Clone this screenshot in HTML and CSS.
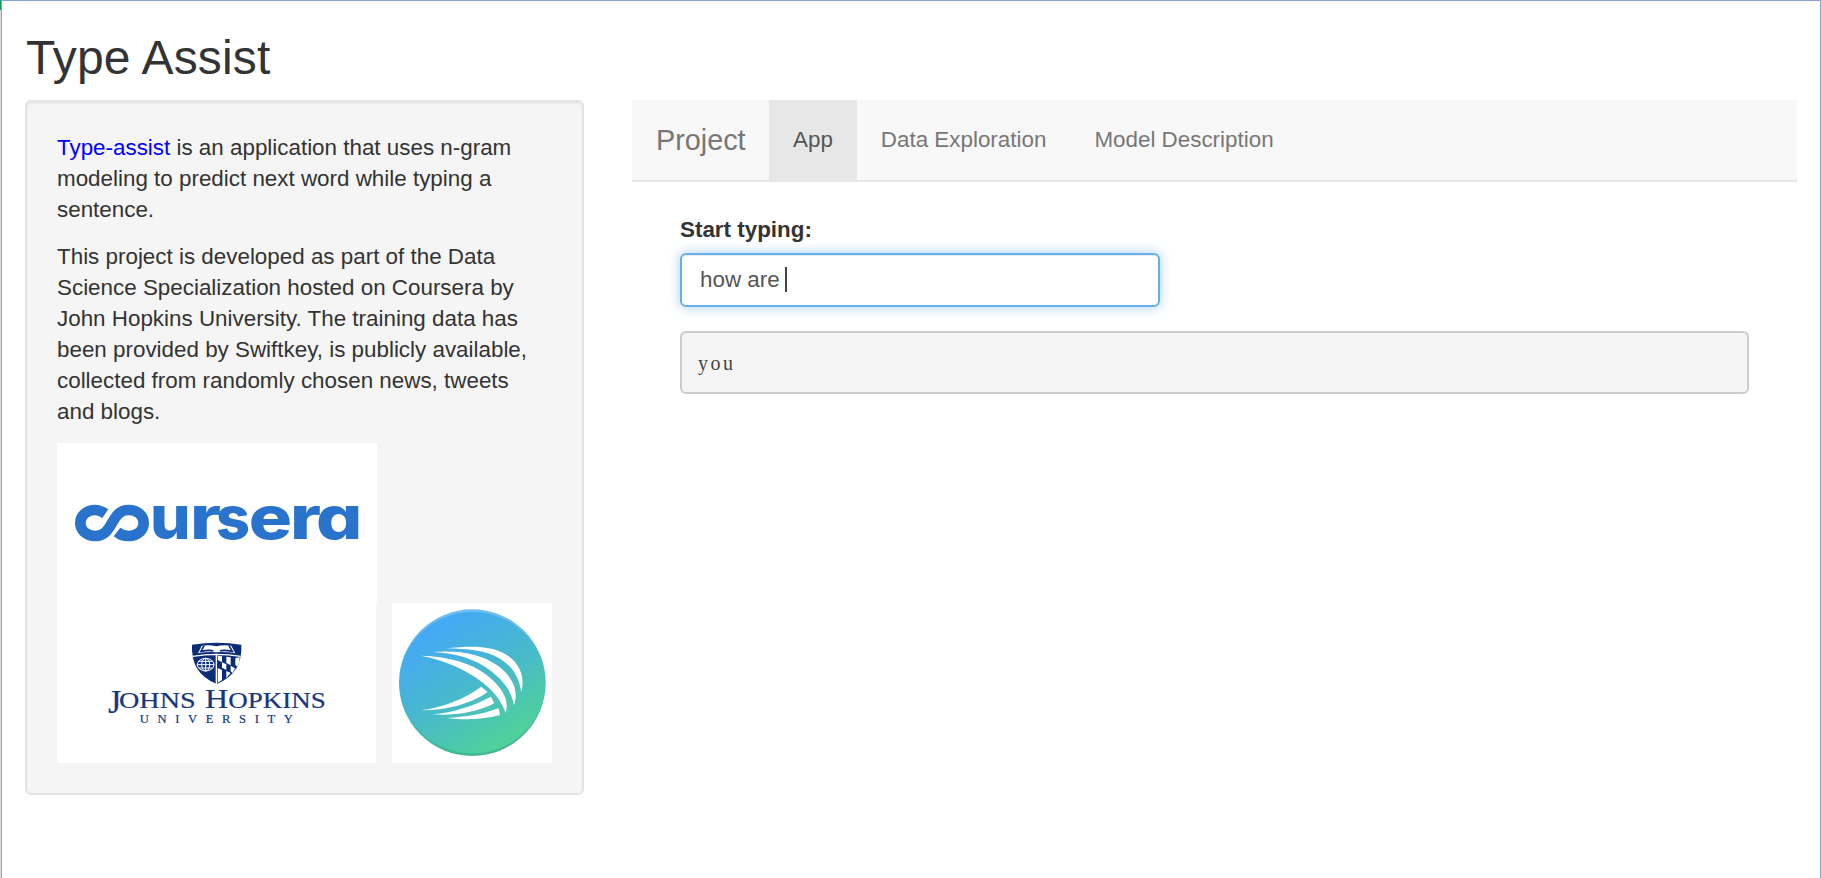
FILE: index.html
```html
<!DOCTYPE html>
<html lang="en">
<head>
<meta charset="utf-8">
<title>Type Assist</title>
<link rel="stylesheet" href="styles.css">
</head>
<body>
<div class="window">
  <h2 class="title">Type Assist</h2>
  <div class="columns">
    <aside class="well">
      <p><span class="name">Type-assist</span> is an application that uses n-gram<br>modeling to predict next word while typing a<br>sentence.</p>
      <p>This project is developed as part of the Data<br>Science Specialization hosted on Coursera by<br>John Hopkins University. The training data has<br>been provided by Swiftkey, is publicly available,<br>collected from randomly chosen news, tweets<br>and blogs.</p>
      <div class="logos">
        <svg class="logo coursera" viewBox="21 9 960 480" role="img" aria-label="coursera">
          <g class="coursera-text">
            <text y="297" x="300" textLength="122" lengthAdjust="spacingAndGlyphs">u</text>
            <text y="297" x="420" textLength="93" lengthAdjust="spacingAndGlyphs">r</text>
            <text y="297" x="498" textLength="102" lengthAdjust="spacingAndGlyphs">s</text>
            <text y="297" x="596" textLength="130" lengthAdjust="spacingAndGlyphs">e</text>
            <text y="297" x="720" textLength="93" lengthAdjust="spacingAndGlyphs">r</text>
            <text y="297" x="798" textLength="139" lengthAdjust="spacingAndGlyphs">a</text>
          </g>
          <path class="loop" d="M166 221C154 213 146 210 136 210C108 210 91 228 91 249C91 270 108 288 136 288C164 288 174 270 186 249C198 228 208 210 236 210C264 210 281 228 281 249C281 270 264 288 236 288C222 288 211 284 201 276"/>
        </svg>
        <svg class="logo hopkins" viewBox="21 9 957 480" role="img" aria-label="Johns Hopkins University">
          <path fill="#0b2d78" d="M426 134Q500 123 574 134Q576 175 560 203Q542 234 500 252Q458 234 440 203Q424 175 426 134Z"/>
          <path fill="none" stroke="#fff" stroke-width="4" d="M428 169Q500 157 572 169M499 163V252"/>
          <path fill="#fff" d="M455 137Q480 133 499 139Q520 133 544 137L556 160Q526 154 500 157Q474 154 444 160Z"/>
          <path fill="none" stroke="#0b2d78" stroke-width="5" d="M462 137L453 154Q480 149 490 153M537 137L547 154Q520 149 510 153"/>
          <g fill="none" stroke="#fff" stroke-width="3">
            <ellipse cx="467" cy="194" rx="25" ry="19"/><ellipse cx="467" cy="194" rx="12" ry="19"/>
            <path d="M467 175V213M442 194H492M446 184H488M446 204H488"/>
          </g>
          <path fill="#fff" d="M503 167L516 169V187L503 180ZM529 170L542 172V196L529 189ZM516 187L529 193V210L516 203ZM503 204L516 210V240L503 248ZM529 213L542 219L529 234ZM542 197L555 205L548 219L542 214ZM556 174L569 172Q570 186 562 200L556 195Z"/>
          <g class="hopkins-text">
            <text y="338" x="174" font-size="102">J</text>
            <text y="324" x="207" font-size="69" textLength="230" lengthAdjust="spacingAndGlyphs">OHNS</text>
            <text y="324" x="465" font-size="82" textLength="362" lengthAdjust="spacingAndGlyphs">H<tspan font-size="69">OPKINS</tspan></text>
            <text y="369" x="269" font-size="38" letter-spacing="24" textLength="484">UNIVERSITY</text>
          </g>
        </svg>
        <svg class="logo swiftkey" viewBox="36 39 480 480">
          <defs><linearGradient id="sky" x1=".2" y1=".1" x2=".75" y2=".95"><stop offset="0" stop-color="#45a8f8"/><stop offset=".5" stop-color="#47b9cc"/><stop offset="1" stop-color="#50d397"/></linearGradient>
          <linearGradient id="rim" x1="0" y1="0" x2="0" y2="1"><stop offset="0" stop-color="#71bdf2"/><stop offset=".5" stop-color="#49b8cb"/><stop offset="1" stop-color="#43b78e"/></linearGradient></defs>
          <circle cx="277" cy="278" r="220" fill="url(#rim)"/>
          <ellipse cx="277" cy="278" rx="218" ry="212" fill="url(#sky)"/>
          <path fill="#fff" d="M199 175C280 166 342 168 385 198C422 224 435 265 424 306C417 263 400 231 360 206C318 180 265 177 199 175ZM158 186C236 179 305 192 352 226C392 256 419 296 402 346C394 304 374 276 333 243C286 206 227 190 158 186ZM122 197C204 199 272 218 319 254C358 284 391 324 377 369C369 344 349 309 306 276C254 236 190 210 122 197ZM123 361C192 351 255 326 304 290L323 306C267 345 191 362 123 361ZM158 373C222 367 279 348 333 320L343 340C285 370 219 377 158 373ZM201 384C257 381 307 373 356 355L360 375C306 389 250 391 201 384Z"/>
        </svg>
      </div>
    </aside>
    <main class="main">
      <nav class="navbar">
        <span class="brand">Project</span><a class="tab active">App</a><a class="tab">Data Exploration</a><a class="tab">Model Description</a>
      </nav>
      <div class="content">
        <label class="label">Start typing:</label>
        <div class="input"><span class="typed">how are</span><span class="caret"></span></div>
        <pre class="output">you</pre>
      </div>
    </main>
  </div>
</div>
</body>
</html>
```
FILE: styles.css
```css
* { box-sizing: border-box; }
body {
  margin: 0;
  height: 878px;
  padding-left: 1px;
  overflow: hidden;
  background: linear-gradient(#159a5c 0 10px, #d9dce0 10px);
  font: 22.4px/31px "Liberation Sans", Arial, sans-serif;
  color: #333;
}
.window {
  height: 878px;
  padding: 29px 23px 0 23px;
  background: #fff;
  border: 1px solid #86a3d9;
  border-bottom: 0;
}
.title {
  margin: 0 0 15px;
  padding-left: 1px;
  font-size: 48px;
  line-height: 55px;
  font-weight: 400;
  letter-spacing: .15px;
}
.columns { display: flex; gap: 48px; align-items: flex-start; }
.well {
  width: 559px;
  height: 695px;
  padding: 30px;
  border: 2px solid #e3e3e3;
  border-radius: 6px;
  background: #f5f5f5;
  box-shadow: inset 0 2px 2px rgba(0, 0, 0, .05);
}
.well p { margin: 0 0 16px; white-space: nowrap; }
.name { color: #00f; }
.logos { display: flex; flex-wrap: wrap; column-gap: 16px; }
.logo { display: block; height: 160px; background: #fff; }
.coursera { width: 320px; margin-right: 100px; }
.hopkins { width: 319px; }
.swiftkey { width: 160px; }
.coursera-text {
  font-family: Inter, sans-serif;
  font-size: 181px;
  font-weight: 800;
  font-feature-settings: "cv11";
  fill: #2a73cc;
}
.loop { fill: none; stroke: #2a73cc; stroke-width: 32px; }
.hopkins-text { font-family: "Liberation Serif", serif; fill: #17377c; stroke: #17377c; stroke-width: .6px; }
.main { flex: 1; }
.navbar {
  display: flex;
  height: 82px;
  background: #f8f8f8;
  border-bottom: 2px solid #e7e7e7;
  color: #777;
  line-height: 79px;
}
.brand { width: 137px; padding-left: 24px; font-size: 28.8px; line-height: 80px; }
.tab { height: 80px; padding: 0 24px; }
.active { background: #e7e7e7; color: #555; }
.content { padding: 32px 48px 0; }
.label { display: block; margin-bottom: 8px; font-weight: 700; }
.input {
  display: flex;
  align-items: center;
  width: 480px;
  height: 54px;
  padding: 0 0 1px 18px;
  border: 2px solid #66afe9;
  border-radius: 6px;
  color: #555;
  box-shadow: inset 0 1px 1px rgba(0, 0, 0, .075), 0 0 12px rgba(102, 175, 233, .6);
}
.caret { width: 2px; height: 25px; margin-left: 5px; background: #444; }
.output {
  height: 63px;
  margin: 24px 0 0;
  padding: 15px 16px;
  border: 2px solid #ccc;
  border-radius: 6px;
  background: #f5f5f5;
  font: 20px/30px "Liberation Serif", serif;
  letter-spacing: 2.5px;
  color: #444;
}
```
